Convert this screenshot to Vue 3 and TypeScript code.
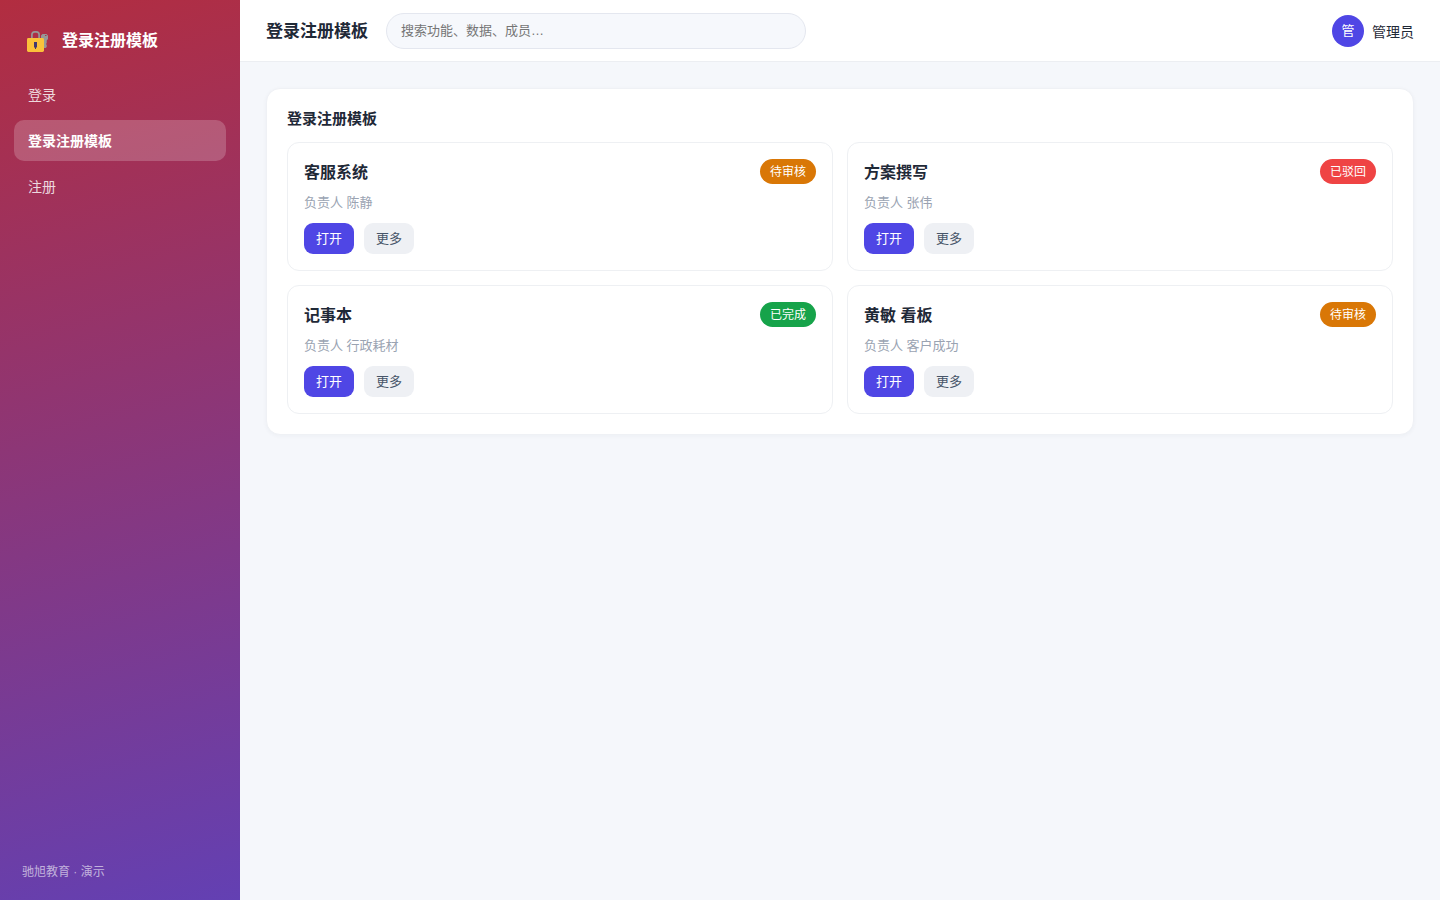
<script setup lang="ts">
interface NavItem {
  label: string
  active?: boolean
}

interface Entry {
  title: string
  owner: string
  status: string
  tone: 'pending' | 'rejected' | 'done'
}

const navItems: NavItem[] = [
  { label: '登录' },
  { label: '登录注册模板', active: true },
  { label: '注册' },
]

const entries: Entry[] = [
  { title: '客服系统', owner: '陈静', status: '待审核', tone: 'pending' },
  { title: '方案撰写', owner: '张伟', status: '已驳回', tone: 'rejected' },
  { title: '记事本', owner: '行政耗材', status: '已完成', tone: 'done' },
  { title: '黄敏 看板', owner: '客户成功', status: '待审核', tone: 'pending' },
]
</script>

<template>
  <div class="layout">
    <aside class="sidebar">
      <div class="brand">
        <svg class="brand-icon" viewBox="0 0 24 24" aria-hidden="true">
          <path
            fill="#979797"
            fill-rule="evenodd"
            d="M16.500 5h4L22 6.400v3.600L20.700 11.500V14l-.7 1 .7 1v2l-1 1H17V11.500L15 9.800V6.500zM19 6v1h1.500V6z"
          />
          <path d="M5.900 9.500V5.600Q5.900 2.800 8.700 2.800h1.600Q13.100 2.800 13.100 5.600v3.900" fill="none" stroke="#979797" stroke-width="1.700" />
          <rect x="1" y="9" width="17" height="14" rx="1.400" fill="#fbc13a" />
          <path d="M8 13h3v5l-1 1v1H9v-1l-1-1z" fill="#40386f" />
        </svg>
        <span>登录注册模板</span>
      </div>
      <nav class="nav">
        <a v-for="item in navItems" :key="item.label" class="nav-item" :class="{ active: item.active }">{{ item.label }}</a>
      </nav>
      <div class="sidebar-foot">驰旭教育 · 演示</div>
    </aside>

    <div class="main">
      <header class="topbar">
        <h1 class="page-title">登录注册模板</h1>
        <input class="search" type="text" placeholder="搜索功能、数据、成员…" />
        <div class="user">
          <span class="avatar">管</span>
          <span>管理员</span>
        </div>
      </header>

      <main class="content">
        <section class="panel">
          <h2 class="panel-title">登录注册模板</h2>
          <div class="grid">
            <article v-for="entry in entries" :key="entry.title" class="card">
              <div class="card-head">
                <h3 class="card-title">{{ entry.title }}</h3>
                <span class="badge" :class="entry.tone">{{ entry.status }}</span>
              </div>
              <p class="owner">负责人 {{ entry.owner }}</p>
              <div class="actions">
                <button class="btn primary" type="button">打开</button>
                <button class="btn" type="button">更多</button>
              </div>
            </article>
          </div>
        </section>
      </main>
    </div>
  </div>
</template>

<style>
body {
  margin: 0;
}
</style>

<style scoped>
.layout,
.layout * {
  box-sizing: border-box;
}

.layout {
  display: flex;
  height: 100vh;
  overflow: hidden;
  background: #f5f7fb;
  color: #1f2937;
  font-family: 'Liberation Sans', 'Noto Sans CJK SC', sans-serif;
  font-size: 14px;
}

h1,
h2,
h3,
p {
  margin: 0;
}

.sidebar {
  display: flex;
  flex-direction: column;
  flex: none;
  width: 240px;
  padding: 22px 14px 21px;
  background: linear-gradient(165deg, #b22d40, #6340b3);
  color: #fff;
}

.brand {
  display: flex;
  align-items: center;
  gap: 12px;
  height: 34px;
  padding-left: 12px;
  font-size: 16px;
  font-weight: 700;
}

.brand-icon {
  width: 24px;
  height: 24px;
  margin-top: 4px;
}

.nav {
  display: flex;
  flex-direction: column;
  gap: 5px;
  margin-top: 18px;
}

.nav-item {
  height: 41px;
  padding: 0 14px;
  border-radius: 10px;
  line-height: 43px;
  color: rgba(255, 255, 255, 0.82);
}

.nav-item.active {
  background: rgba(255, 255, 255, 0.2);
  color: #fff;
  font-weight: 700;
}

.sidebar-foot {
  margin-top: auto;
  padding-left: 8px;
  font-size: 12px;
  line-height: 14px;
  color: rgba(255, 255, 255, 0.6);
}

.main {
  flex: 1;
  min-width: 0;
}

.topbar {
  display: flex;
  align-items: center;
  height: 62px;
  padding: 0 26px;
  border-bottom: 1px solid #eceef2;
  background: #fff;
}

.page-title {
  padding-top: 2px;
  font-size: 17px;
  line-height: 24px;
}

.search {
  width: 420px;
  height: 36px;
  margin-left: 18px;
  padding: 0 14px;
  border: 1px solid #e4e7ef;
  border-radius: 18px;
  background: #f6f8fc;
  font: inherit;
  font-size: 13px;
}

.search::placeholder {
  color: #757575;
}

.user {
  display: flex;
  align-items: center;
  gap: 8px;
  margin-left: auto;
}

.avatar {
  width: 32px;
  height: 32px;
  border-radius: 50%;
  background: #4f46e5;
  color: #fff;
  font-size: 13px;
  line-height: 32px;
  text-align: center;
}

.content {
  padding: 26px;
}

.panel {
  height: 347px;
  padding: 20px;
  border: 1px solid #eff1f5;
  border-radius: 14px;
  background: #fff;
  box-shadow: 0 1px 4px rgba(30, 41, 80, 0.04);
}

.panel-title {
  height: 33px;
  font-size: 15px;
  line-height: 20px;
}

.grid {
  display: grid;
  grid-template-columns: repeat(2, 1fr);
  gap: 14px;
}

.card {
  height: 129px;
  padding: 16px;
  border: 1px solid #eef0f3;
  border-radius: 12px;
}

.card-head {
  display: flex;
  align-items: flex-start;
  justify-content: space-between;
}

.card-title {
  font-size: 16px;
  line-height: 27px;
}

.badge {
  height: 25px;
  padding: 0 10px;
  border-radius: 13px;
  color: #fff;
  font-size: 12px;
  line-height: 27px;
}

.badge.pending {
  background: #d97706;
}

.badge.rejected {
  background: #ef4444;
}

.badge.done {
  background: #16a34a;
}

.owner {
  margin: 7px 0 10px;
  color: #9aa3b2;
  font-size: 13px;
  line-height: 20px;
}

.actions {
  display: flex;
  gap: 10px;
}

.btn {
  width: 50px;
  height: 31px;
  padding: 0 0 2px;
  border: 0;
  border-radius: 9px;
  background: #eef0f4;
  color: #475569;
  font: inherit;
  font-size: 13px;
}

.btn.primary {
  background: #4f46e5;
  color: #fff;
}
</style>
